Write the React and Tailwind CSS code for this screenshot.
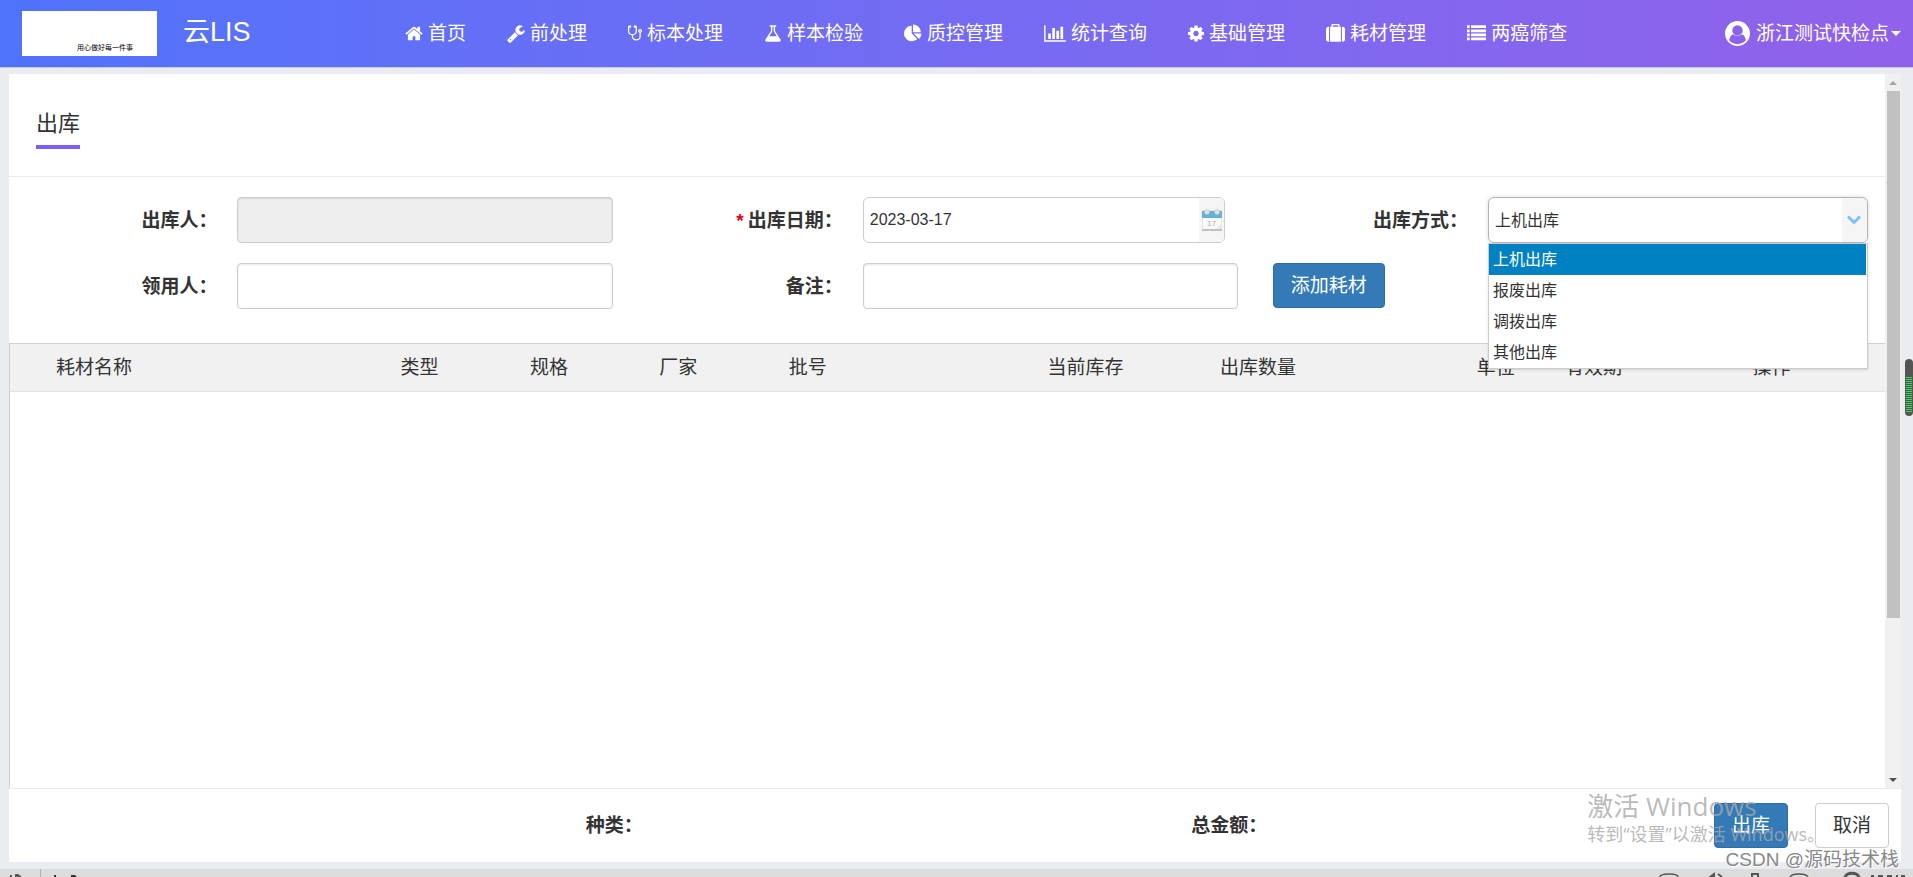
import { useState } from 'react';

const navItems = [
  {
    label: '首页',
    box: '64 0 1664 1792',
    size: 'w-[18px]',
    d: 'M1472 992v480q0 26-19 45t-45 19h-384v-384h-256v384h-384q-26 0-45-19t-19-45v-480q0-1 .5-3t.5-3l575-474 575 474q1 2 1 6zm223-69l-62 74q-8 9-21 11h-3q-13 0-21-7l-692-577-692 577q-12 8-24 7-13-2-21-11l-62-74q-8-10-7-23.5t11-21.5l719-599q32-26 76-26t76 26l244 204v-195q0-14 9-23t23-9h192q14 0 23 9t9 23v408l219 182q10 8 11 21.5t-7 23.5z',
  },
  {
    label: '前处理',
    box: '64 0 1664 1792',
    size: 'w-[18px]',
    d: 'M448 1472q0-26-19-45t-45-19-45 19-19 45 19 45 45 19 45-19 19-45zm644-420l-682 682q-37 37-90 37-52 0-91-37l-106-108q-38-36-38-90 0-53 38-91l681-681q39 98 114.5 173.5t173.5 114.5zm634-435q0 39-23 106-47 134-164.5 217.5t-258.5 83.5q-185 0-316.5-131.5t-131.5-316.5 131.5-316.5 316.5-131.5q58 0 121.5 16.5t107.5 46.5q16 11 16 28t-16 28l-293 169v224l193 107q5-3 79-48.5t135.5-81 70.5-35.5q15 0 23.5 10t8.5 25z',
  },
  {
    label: '标本处理',
    box: '64 0 1408 1792',
    size: 'w-[14px]',
    d: 'M1344 640q0-26-19-45t-45-19-45 19-19 45 19 45 45 19 45-19 19-45zm128 0q0 62-35.5 111t-92.5 70v395q0 159-131.5 271.5t-316.5 112.5-316.5-112.5-131.5-271.5v-132q-164-20-274-128t-110-252v-512q0-26 19-45t45-19q6 0 16 2 17-30 47-48t65-18q53 0 90.5 37.5t37.5 90.5-37.5 90.5-90.5 37.5q-33 0-64-18v402q0 106 94 181t226 75 226-75 94-181v-402q-31 18-64 18-53 0-90.5-37.5t-37.5-90.5 37.5-90.5 90.5-37.5q35 0 65 18t47 48q10-2 16-2 26 0 45 19t19 45v512q0 144-110 252t-274 128v132q0 106 94 181t226 75 226-75 94-181v-395q-57-21-92.5-70t-35.5-111q0-80 56-136t136-56 136 56 56 136z',
  },
  {
    label: '样本检验',
    box: '64 0 1664 1792',
    size: 'w-[18px]',
    d: 'M1591 1448q56 89 21.5 152.5t-140.5 63.5h-1152q-106 0-140.5-63.5t21.5-152.5l503-793v-399h-64q-26 0-45-19t-19-45 19-45 45-19h512q26 0 45 19t19 45-19 45-45 19h-64v399zm-779-725l-272 429h712l-272-429-20-31v-436h-128v436z',
  },
  {
    label: '质控管理',
    box: '0 0 1792 1792',
    size: 'w-[18px]',
    d: 'M768 890l546 546q-106 108-247.5 168t-298.5 60q-209 0-385.5-103t-279.5-279.5-103-385.5 103-385.5 279.5-279.5 385.5-103v762zm187 6h773q0 157-60 298.5t-168 247.5zm709-128h-768v-768q209 0 385.5 103t279.5 279.5 103 385.5z',
  },
  {
    label: '统计查询',
    box: '0 0 2048 1792',
    size: 'w-[22px]',
    d: 'M640 896v512h-256v-512h256zm384-512v1024h-256v-1024h256zm1024 1152v128h-2048v-1536h128v1408h1920zm-640-896v768h-256v-768h256zm384-384v1152h-256v-1152h256z',
  },
  {
    label: '基础管理',
    box: '128 0 1536 1792',
    size: 'w-[16px]',
    d: 'M1152 896q0-106-75-181t-181-75-181 75-75 181 75 181 181 75 181-75 75-181zm512-109v222q0 12-8 23t-20 13l-185 28q-19 54-39 91 35 50 107 138 10 12 10 25t-9 23q-27 37-99 108t-94 71q-12 0-26-9l-138-108q-44 23-91 38-16 136-29 186-7 28-36 28h-222q-14 0-24.5-8.5t-11.5-21.5l-28-184q-49-16-90-37l-141 107q-10 9-25 9-14 0-25-11-126-114-165-168-7-10-7-23 0-12 8-23 15-21 51-66.5t54-70.5q-27-50-41-99l-183-27q-13-2-21-12.5t-8-23.5v-222q0-12 8-23t19-13l186-28q14-46 39-92-40-57-107-138-10-12-10-24 0-10 9-23 26-36 98.5-107.5t94.5-71.5q13 0 26 10l138 107q44-23 91-38 16-136 29-186 7-28 36-28h222q14 0 24.5 8.5t11.5 21.5l28 184q49 16 90 37l142-107q9-9 24-9 13 0 25 10 129 119 165 170 7 8 7 22 0 12-8 23-15 21-51 66.5t-54 70.5q26 50 41 98l183 28q13 2 21 12.5t8 23.5z',
  },
  {
    label: '耗材管理',
    box: '0 0 1792 1792',
    size: 'w-[19px]',
    d: 'M640 256h512v-128h-512v128zm-352 0v1408h-64q-92 0-158-66t-66-158v-960q0-92 66-158t158-66h64zm1120 0v1408h-1024v-1408h128v-160q0-40 28-68t68-28h576q40 0 68 28t28 68v160h128zm384 224v960q0 92-66 158t-158 66h-64v-1408h64q92 0 158 66t66 158z',
  },
  {
    label: '两癌筛查',
    box: '0 0 1792 1792',
    size: 'w-[19px]',
    d: 'M0 128h256v256h-256zM384 128h1408v256h-1408zM0 512h256v256h-256zM384 512h1408v256h-1408zM0 896h256v256h-256zM384 896h1408v256h-1408zM0 1280h256v256h-256zM384 1280h1408v256h-1408z',
  },
];

const columns = [
  { label: '耗材名称', width: 'w-[20.4%]' },
  { label: '类型', width: 'w-[6.9%]' },
  { label: '规格', width: 'w-[6.9%]' },
  { label: '厂家', width: 'w-[6.9%]' },
  { label: '批号', width: 'w-[13.8%]' },
  { label: '当前库存', width: 'w-[9.2%]' },
  { label: '出库数量', width: 'w-[13.7%]' },
  { label: '单位', width: 'w-[4.7%]' },
  { label: '有效期', width: 'w-[10%]' },
  { label: '操作', width: 'w-[7.5%]' },
];

const outTypes = ['上机出库', '报废出库', '调拨出库', '其他出库'];

const inputClass =
  'h-[46px] border border-[#ccc] rounded px-1.5 text-base shadow-[inset_0_1px_2px_rgba(0,0,0,0.1)] outline-none';
const labelClass = 'w-1/3 shrink-0 text-right font-bold mr-5';

function Header() {
  return (
    <header className="h-[68px] shrink-0 flex items-center border-b border-[#c9c6e0] bg-linear-to-r from-[#4f73fb] to-[#9161ea] text-white pl-[22px] pr-3">
      <div className="w-[135px] h-[45px] bg-white flex items-end justify-end pr-6 pb-1 text-black text-[7px] leading-[8px] whitespace-nowrap">
        用心做好每一件事
      </div>
      <h1 className="text-[27px] leading-none ml-[26px] w-[222px] pb-0.5">云LIS</h1>
      <nav className="grow">
        <ul className="flex gap-[41px]">
          {navItems.map(item => (
            <li key={item.label}>
              <a href="#" className="flex items-center gap-[5px] whitespace-nowrap">
                <svg viewBox={item.box} className={`h-[19px] shrink-0 ${item.size}`} fill="currentColor">
                  <path d={item.d} />
                </svg>
                {item.label}
              </a>
            </li>
          ))}
        </ul>
      </nav>
      <button className="flex items-center whitespace-nowrap">
        <svg viewBox="0 0 24 24" className="w-[25px] h-[25px] mr-1.5">
          <circle cx="12" cy="12" r="12" fill="#fff" />
          <circle cx="12" cy="9" r="5" fill="#8a63ec" />
          <path d="M4 18.500c.4-3 1.600-5.300 3.800-5.900a6.400 6.400 0 0 0 8.400 0c2.200.6 3.400 2.900 3.800 5.900-2 2.400-4.800 3.700-8 3.700s-6-1.300-8-3.700z" fill="#8a63ec" />
          <path d="M5.800 18c1.300-2.200 3.400-2 6.200-2s4.900-.2 6.200 2" fill="none" />
        </svg>
        浙江测试快检点
        <span className="ml-0.5 border-x-5 border-x-transparent border-t-5 border-t-white" />
      </button>
    </header>
  );
}

function CalendarIcon() {
  return (
    <svg viewBox="0 0 20 22" className="w-5 h-[22px]">
      <rect x="0" y="2" width="20" height="19" fill="#f8f8f8" stroke="#d8d8d8" />
      <rect x="0" y="2" width="20" height="7" fill="#62b2dc" />
      <rect x="0" y="20" width="20" height="2" fill="#c0c0c0" />
      <circle cx="5" cy="3" r="2.5" fill="#e2e2e2" stroke="#bbb" strokeWidth=".5" />
      <circle cx="15" cy="3" r="2.5" fill="#e2e2e2" stroke="#bbb" strokeWidth=".5" />
      <text x="5" y="17" fontSize="8" fill="#b5b5b5" fontFamily="Liberation Sans">17</text>
      <path d="M14 20l5-5v5z" fill="#e8e8e8" />
    </svg>
  );
}

function OutTypeSelect({ value, onChange }) {
  return (
    <div className="relative grow mr-[17px]">
      <select
        id="outType"
        value={value}
        onChange={e => onChange(e.target.value)}
        className="block appearance-none w-full h-[46px] border border-[#b5b5b5] rounded-md pl-1.5 pt-0.5 text-base bg-white shadow-[0_0_4px_rgba(0,0,0,0.15)] outline-none"
      >
        {outTypes.map(t => (
          <option key={t}>{t}</option>
        ))}
      </select>
      <span className="absolute right-px top-px h-11 w-[25px] rounded-r-md bg-[#f5f5f5] flex items-center justify-center pointer-events-none">
        <svg viewBox="0 0 14 10" className="w-3.5 h-2.5" fill="none" stroke="#7cc0f5" strokeWidth="3">
          <path d="M1 1.500l6 6 6-6" />
        </svg>
      </span>
      <ul className="absolute z-10 left-0 right-0 top-full bg-white border border-[#ccc] shadow-sm text-base">
        {outTypes.map(t => (
          <li
            key={t}
            onClick={() => onChange(t)}
            className={`h-[31px] leading-[31px] pl-1 mr-px ${t === value ? 'bg-[#0081c2] text-white' : ''}`}
          >
            {t}
          </li>
        ))}
      </ul>
    </div>
  );
}

function Scrollbar() {
  return (
    <div className="w-4 shrink-0 bg-[#f1f1f1] flex flex-col items-center">
      <span className="h-[17px] shrink-0 flex items-center">
        <span className="border-x-4 border-x-transparent border-b-4 border-b-[#a3a3a3]" />
      </span>
      <div className="grow w-full flex justify-center">
        <div className="w-[13px] h-[77.5%] bg-[#c1c1c1]" />
      </div>
      <span className="h-[17px] shrink-0 flex items-center">
        <span className="border-x-4 border-x-transparent border-t-4 border-t-[#505050]" />
      </span>
    </div>
  );
}

export default function App() {
  const [outType, setOutType] = useState('上机出库');
  const [receiver, setReceiver] = useState('');
  const [remark, setRemark] = useState('');
  const [date, setDate] = useState('2023-03-17');

  return (
    <div className="relative h-screen overflow-hidden flex flex-col bg-[#e9edf2] text-[#333] text-[19px] leading-[27px] font-['Liberation_Sans','Noto_Sans_CJK_SC',sans-serif]">
      <Header />

      <main className="grow min-h-0 flex mt-1.5 ml-[9px] mr-3 bg-white">
        <div className="grow min-w-0 flex flex-col">
          <div className="pt-8 pb-[27px] pl-[27px] border-b border-[#eaeaea]">
            <h2 className="inline-block align-top text-[22px] leading-[35px] pb-1 border-b-4 border-[#7a5cff]">出库</h2>
          </div>

          <form className="grid grid-cols-3 gap-y-5 pt-5 pb-[34px]">
            <div className="flex items-center">
              <label htmlFor="operator" className={labelClass}>出库人：</label>
              <input id="operator" disabled className={`${inputClass} w-3/5 bg-[#eee]`} />
            </div>
            <div className="flex items-center">
              <label htmlFor="outDate" className={labelClass}>
                <span className="text-red-600 mr-1">*</span>出库日期：
              </label>
              <div className="w-[58%] h-[46px] flex border border-[#ccc] rounded-md overflow-hidden">
                <input
                  id="outDate"
                  value={date}
                  onChange={e => setDate(e.target.value)}
                  className="grow min-w-0 px-1.5 text-base outline-none"
                />
                <button type="button" aria-label="出库日期" className="w-[25px] flex items-center justify-center bg-[#f5f5f5]">
                  <CalendarIcon />
                </button>
              </div>
            </div>
            <div className="flex items-center">
              <label htmlFor="outType" className={labelClass}>出库方式：</label>
              <OutTypeSelect value={outType} onChange={setOutType} />
            </div>
            <div className="flex items-center">
              <label htmlFor="receiver" className={labelClass}>领用人：</label>
              <input
                id="receiver"
                value={receiver}
                onChange={e => setReceiver(e.target.value)}
                className={`${inputClass} w-3/5`}
              />
            </div>
            <div className="flex items-center">
              <label htmlFor="remark" className={labelClass}>备注：</label>
              <input
                id="remark"
                value={remark}
                onChange={e => setRemark(e.target.value)}
                className={`${inputClass} w-3/5`}
              />
            </div>
            <div className="pl-[13px]">
              <button type="button" className="h-[45px] px-[17px] rounded border border-[#2e6da4] bg-[#337ab7] text-white">
                添加耗材
              </button>
            </div>
          </form>

          <div className="grow border-l border-t border-[#d0d0d0]">
            <table className="w-full table-fixed">
              <thead>
                <tr className="h-[47px] bg-[#f1f1f1] border-b border-[#e3e3e3]">
                  {columns.map(c => (
                    <th
                      key={c.label}
                      className={`px-2 text-left font-normal whitespace-nowrap first:pl-[46px] ${c.width}`}
                    >
                      {c.label}
                    </th>
                  ))}
                </tr>
              </thead>
              <tbody />
            </table>
          </div>
        </div>
        <Scrollbar />
      </main>

      <footer className="h-[74px] shrink-0 ml-[9px] mr-3 flex items-center bg-white border-t border-[#eaeaea]">
        <div className="w-[33.5%] text-right font-bold">种类：</div>
        <div className="w-[33%] text-right font-bold">总金额：</div>
        <div className="grow flex justify-end gap-[27px] pr-3">
          <button className="h-[45px] px-[17px] rounded border border-[#2e6da4] bg-[#337ab7] text-white">出库</button>
          <button className="h-[45px] px-[17px] rounded border border-[#ccc] bg-white">取消</button>
        </div>
      </footer>

      {/* top edge of the system bar */}
      <div className="h-2 shrink-0 mt-[7px] bg-[#dcdcdc] flex justify-between overflow-hidden">
        <svg viewBox="0 0 100 8" className="w-[100px] h-2">
          <path d="M10 6h2v2h-2zM15 5h3l3 2v1h-6z" fill="#555" />
          <path d="M40.5 0v8" stroke="#b0b0b0" />
          <path d="M54 6h2v2h-2zM71 6h4l2 2h-6z" fill="#333" />
        </svg>
        <svg viewBox="0 0 260 8" className="w-[260px] h-2" fill="none" stroke="#555" strokeWidth="1.5">
          <path d="M7 8c0-4 18-4 18 0M137 8c2-4 16-4 18 0" />
          <path d="M57 8l4-3v3zM65 5l4 3M99 8v-3h6v3" strokeWidth="2" />
          <path d="M192 8c2-5 12-5 14 0" strokeWidth="3" />
          <path d="M218 7h3M225 7h5M234 7h5M243 7h2M248 7h4" strokeWidth="2" />
        </svg>
      </div>

      <div className="absolute right-0 top-[359px] w-2 h-[57px] rounded-full bg-[#555] pt-[18px] pb-1 px-px">
        <div className="h-full bg-[repeating-linear-gradient(#3fcf62_0_1px,#4a5a4c_1px_2px)]" />
      </div>

      <div className="absolute right-[88px] bottom-[31px] text-[#a8a8a8]/80 pointer-events-none">
        <p className="text-[26px] leading-8 font-['Open_Sans','Noto_Sans_CJK_SC',sans-serif]">激活 Windows</p>
        <p className="text-lg leading-6 font-['Open_Sans','Noto_Sans_CJK_SC',sans-serif]">转到“设置”以激活 Windows。</p>
      </div>
      <div className="absolute right-3.5 bottom-1 text-[#888] pointer-events-none text-shadow-[1px_1px_0_#fff]">
        CSDN @源码技术栈
      </div>
    </div>
  );
}
